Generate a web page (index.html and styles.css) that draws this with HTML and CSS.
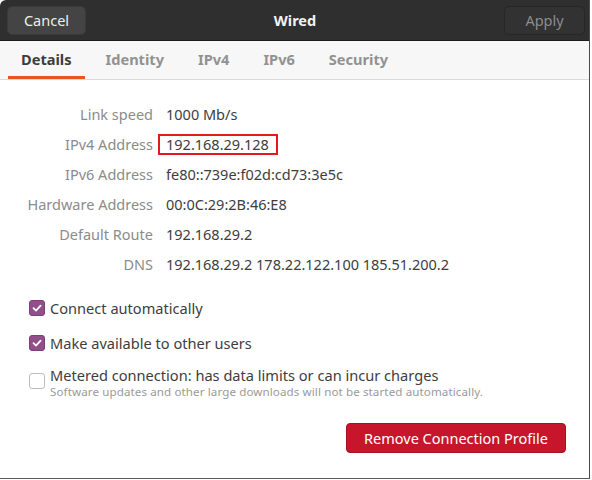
FILE: index.html
```html
<!DOCTYPE html>
<html lang="en">
<head>
    <meta charset="UTF-8">
    <title>Wired</title>
    <link rel="stylesheet" href="styles.css">
</head>
<body>
    <div class="window">
        <header class="headerbar">
            <button class="hb-btn">Cancel</button>
            <h1 class="title">Wired</h1>
            <button class="hb-btn disabled">Apply</button>
        </header>
        <nav class="tabs">
            <div class="tab active">Details</div>
            <div class="tab">Identity</div>
            <div class="tab">IPv4</div>
            <div class="tab">IPv6</div>
            <div class="tab">Security</div>
        </nav>
        <main class="content">
            <div class="props">
                <div class="label">Link speed</div><div class="value">1000 Mb/s</div>
                <div class="label">IPv4 Address</div><div class="value"><span class="marked">192.168.29.128</span></div>
                <div class="label">IPv6 Address</div><div class="value">fe80::739e:f02d:cd73:3e5c</div>
                <div class="label">Hardware Address</div><div class="value">00:0C:29:2B:46:E8</div>
                <div class="label">Default Route</div><div class="value">192.168.29.2</div>
                <div class="label">DNS</div><div class="value">192.168.29.2 178.22.122.100 185.51.200.2</div>
            </div>
            <div class="checks">
                <label class="check">
                    <span class="box on"><svg width="12" height="12" viewBox="0 0 12 12"><path d="M2.5 6.2 L5 8.6 L9.6 3.6" fill="none" stroke="#fff" stroke-width="1.8" stroke-linecap="round" stroke-linejoin="round"/></svg></span>
                    <span class="check-text">Connect automatically</span>
                </label>
                <label class="check">
                    <span class="box on"><svg width="12" height="12" viewBox="0 0 12 12"><path d="M2.5 6.2 L5 8.6 L9.6 3.6" fill="none" stroke="#fff" stroke-width="1.8" stroke-linecap="round" stroke-linejoin="round"/></svg></span>
                    <span class="check-text">Make available to other users</span>
                </label>
                <label class="check metered">
                    <span class="box"></span>
                    <span class="check-text">
                        <span class="main-line">Metered connection: has data limits or can incur charges</span>
                        <small>Software updates and other large downloads will not be started automatically.</small>
                    </span>
                </label>
            </div>
            <div class="actions">
                <button class="danger">Remove Connection Profile</button>
            </div>
        </main>
    </div>
</body>
</html>
```

FILE: styles.css
```css
html, body { margin: 0; background: #fff; }
body { font-family: "Noto Sans", "DejaVu Sans", sans-serif; width: 592px; height: 480px; overflow: hidden; }
.window { width: 589px; height: 478px; border-right: 1px solid #4a4a4a; border-bottom: 1px solid #5a5a5a; background: #fff; display: flex; flex-direction: column; border-top-left-radius: 6px; overflow: hidden; }

.headerbar { height: 41px; background: #2f2f2f; border-bottom: 1px solid #1c1c1c; display: flex; align-items: center; justify-content: space-between; padding: 0 4px 0 7px; box-sizing: border-box; flex: none; }
.hb-btn { height: 29px; width: 79px; border: 1px solid #3a3a3a; border-radius: 5px; background: #444; color: #eee; font: 14.5px "Noto Sans", sans-serif; padding: 0; }
.hb-btn.disabled { background: #323232; border-color: #262626; color: #8c8c8c; width: 81px; }
.title { margin: 0; font-size: 14.5px; font-weight: bold; color: #f2f2f2; }

.tabs { height: 38px; background: #f7f7f7; border-bottom: 1px solid #dadada; display: flex; gap: 8px; padding-left: 8px; flex: none; }
.tab { padding: 0 13px; font-size: 14.6px; font-weight: bold; color: #929292; line-height: 37px; height: 35px; border-bottom: 3px solid transparent; }
.tab.active { color: #3d3d3d; border-bottom-color: #e95420; }

.content { flex: 1; padding-top: 19px; }
.props { display: grid; grid-template-columns: 153px auto; column-gap: 13px; grid-auto-rows: 30px; align-items: center; font-size: 14.5px; }
.label { text-align: right; color: #8b8b8b; }
.value { color: #3d3d3d; }
.marked { display: inline-block; line-height: 17px; outline: 2px solid #e21a1a; padding: 0 7px 0 6px; margin-left: -6px; }

.checks { padding: 21px 0 0 29px; display: flex; flex-direction: column; }
.check { display: flex; align-items: center; gap: 5px; font-size: 14.6px; color: #3d3d3d; height: 16px; margin-bottom: 19px; }
.box { width: 16px; height: 16px; box-sizing: border-box; border-radius: 3px; border: 1px solid #bcbcbc; background: #fff; flex: none; display: flex; align-items: center; justify-content: center; }
.box.on { background: #924d8b; border-color: #7e3f78; }
.check.metered { margin-top: -3px; height: auto; align-items: flex-start; }
.check.metered .box { margin-top: 6px; }
.check-text { line-height: 16px; }
.main-line { display: block; height: 16px; }
.check-text small { display: block; margin-top: 2px; font-size: 11.6px; color: #9a9a9a; line-height: 14px; letter-spacing: 0.1px; }

.actions { display: flex; justify-content: flex-end; padding: 5px 23px 0 0; }
.danger { width: 220px; height: 30px; border: 1px solid #a8101f; border-radius: 4px; background: #c7162b; color: #fff; font: 14.5px "Noto Sans", sans-serif; padding: 0; }
```
